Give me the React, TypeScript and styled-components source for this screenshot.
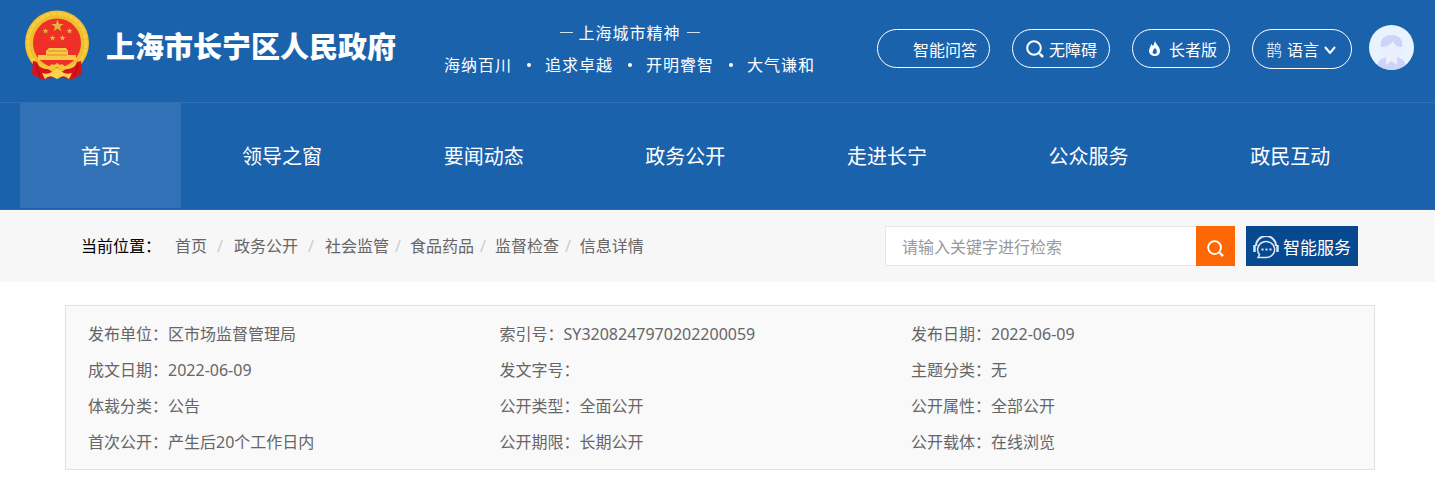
import React from "react";
import styled, { createGlobalStyle } from "styled-components";

const sans = `"Noto Sans", "Noto Sans CJK SC", sans-serif`;

const GlobalStyle = createGlobalStyle`
  * { box-sizing: border-box; }
  body { margin: 0; background: #fff; font-family: ${sans}; font-size: 16px; color: #666; }
  a { color: inherit; text-decoration: none; }
  button, input { font: inherit; }
`;

const Header = styled.header`
  background: #1b62ad;
  color: #fff;
`;

const TopBar = styled.div`
  display: flex;
  align-items: flex-start;
  height: 102px;
  padding: 0 21px 0 24px;
`;

const Brand = styled.a`
  display: flex;
  align-items: center;
  gap: 16px;
  padding-top: 10px;
  width: 420px;
`;

const SiteName = styled.h1`
  margin: 0;
  font: 900 29px/40px "Noto Sans CJK SC", sans-serif;
  white-space: nowrap;
`;

const Spirit = styled.div`
  display: flex;
  flex-direction: column;
  align-items: center;
  padding-top: 20px;
  gap: 8px;
  font: 400 16px/24px "Noto Sans CJK SC", sans-serif;
  letter-spacing: 1px;
  white-space: nowrap;
`;

const SpiritRow = styled.div`
  display: flex;
  align-items: center;
  gap: 6px;
`;

const Dash = styled.i`
  width: 13px;
  height: 1px;
  background: #d5e2f0;
`;

const Virtues = styled.ul`
  display: flex;
  gap: 33px;
  margin: 0;
  padding: 0;
  list-style: none;

  li + li { position: relative; }
  li + li::before {
    content: "";
    position: absolute;
    left: -18px;
    top: 11px;
    width: 4px;
    height: 4px;
    border-radius: 50%;
    background: #fff;
  }
`;

const Tools = styled.div`
  display: flex;
  align-items: flex-start;
  gap: 22px;
  margin-left: auto;
  padding-top: 29px;
`;

const Pill = styled.button<{ $width: number; $inset?: number; $gap?: number; $tall?: boolean }>`
  display: flex;
  align-items: center;
  gap: ${(p) => p.$gap ?? 5}px;
  width: ${(p) => p.$width}px;
  height: ${(p) => (p.$tall ? 40 : 39)}px;
  padding: 0 0 0 ${(p) => p.$inset ?? 13}px;
  border: 1px solid #fff;
  border-radius: 20px;
  background: none;
  color: #fff;
  white-space: nowrap;
`;

const Glyph = styled.span`
  font-family: "Noto Sans CJK SC", sans-serif;
  font-weight: 300;
`;

const Avatar = styled.a`
  display: block;
  width: 45px;
  height: 45px;
  margin: -4px 0 0 -5px;
`;

const Nav = styled.nav`
  display: grid;
  grid-template-columns: 4fr repeat(6, 5fr);
  padding: 0 44px 1px 20px;
  border-top: 1px solid #3270b2;
  border-bottom: 1px solid #2a6bb1;
`;

const NavLink = styled.a<{ $active?: boolean }>`
  padding-top: 3px;
  text-align: center;
  font-size: 20px;
  line-height: 102px;
  background: ${(p) => (p.$active ? "#3271b5" : "none")};
`;

const LocationBar = styled.section`
  display: flex;
  align-items: center;
  justify-content: space-between;
  height: 72px;
  padding: 0 77px 0 81px;
  background: #f7f7f7;
`;

const Crumbs = styled.nav`
  display: flex;
  white-space: nowrap;
  line-height: 24px;
`;

const CrumbLabel = styled.span`
  width: 94px;
  color: #000;
`;

const Slash = styled.span<{ $wide?: boolean }>`
  padding: 0 ${(p) => (p.$wide ? "11px 0 10px" : "9px 0 6px")};
  color: #ccc;
`;

const Actions = styled.div`
  display: flex;
  gap: 11px;
`;

const Search = styled.form`
  display: flex;
`;

const SearchInput = styled.input`
  width: 311px;
  height: 40px;
  padding: 2px 16px 0;
  border: 1px solid #e6e6e6;
  border-right: 0;
  border-radius: 0;
  background: #fff;
  outline: none;
  &::placeholder { color: #999; opacity: 1; }
`;

const SearchButton = styled.button`
  display: flex;
  align-items: center;
  justify-content: center;
  width: 39px;
  padding: 4px 0 0;
  border: 0;
  background: #fe6706;
`;

const Service = styled.a`
  display: flex;
  align-items: center;
  gap: 4px;
  width: 112px;
  height: 40px;
  padding: 3px 0 0 7px;
  background: #07498f;
  color: #fff;
  font-size: 17px;
  line-height: 20px;
  white-space: nowrap;
`;

const Details = styled.dl`
  display: grid;
  grid-template-columns: repeat(3, minmax(0, 32fr)) 4fr;
  grid-auto-rows: 36px;
  margin: 23px 60px 0 65px;
  padding: 10px 0 9px 22px;
  border: 1px solid #e1e1e1;
  background: #f9f9f9;
`;

const Detail = styled.div`
  display: flex;
  line-height: 36px;
  white-space: nowrap;
  &:nth-child(3n + 1) { grid-column: 1; }
  dt, dd { margin: 0; }
`;

const star = (cx: number, cy: number, r: number) =>
  Array.from({ length: 10 }, (_, i) => {
    const a = (Math.PI / 5) * i - Math.PI / 2;
    const d = i % 2 ? r * 0.4 : r;
    return `${cx + d * Math.cos(a)},${cy + d * Math.sin(a)}`;
  }).join(" ");

const Emblem = () => (
  <svg width="66" height="70" viewBox="0 0 66 70" aria-hidden="true">
    <ellipse cx="33" cy="33" rx="28" ry="28.5" fill="#ee3028" stroke="#f0bd2c" strokeWidth="8" />
    <ellipse cx="33" cy="33" rx="29" ry="29.5" fill="none" stroke="#fbd84f" strokeWidth="3" strokeDasharray="5 1" opacity="0.6" />
    <g fill="#e6b63c">
      <polygon points={star(33.5, 16, 6.5)} />
      <polygon points={star(21.5, 21, 3.3)} />
      <polygon points={star(45.5, 21, 3.3)} />
      <polygon points={star(28.5, 28, 3.3)} />
      <polygon points={star(38.5, 28, 3.3)} />
    </g>
    <path d="M25 38 H42 L44 41 V45 H52 V50 H14 V45 H22 V41Z" fill="#f8ca43" />
    <path d="M24 41 H43 M23 45 H43" stroke="#dc8a2c" strokeWidth="1" />
    <path d="M9 51 L14 52 L27 61 L33 64 L39 61 L52 52 L57 51 L58 64 L49 69 L38 68 H28 L17 69 L8 64Z" fill="#d7141a" />
    <path d="M12 55 L16 67 M54 55 L50 67" stroke="#a90d14" strokeWidth="1" />
    <path d="M12 50 Q18 56 26 56 Q27 53 30 55 L33 53 L36 55 Q39 53 40 56 Q48 56 54 50 L51 56 Q46 60 39 59 L33 57 L27 59 Q20 60 15 56Z" fill="#f6c53b" />
    <path d="M18 63 Q25 65 29 61 L33 59 L37 61 Q41 65 48 63 L45 69 Q40 65 37 67 L33 69 L29 67 Q25 65 21 69Z" fill="#ffd34b" />
  </svg>
);

const SearchIcon = ({ size = 18 }: { size?: number }) => (
  <svg width={size} height={size} viewBox="0 0 18 18" fill="none" stroke="#fff" strokeWidth="2" aria-hidden="true">
    <circle cx="8" cy="8" r="6.8" />
    <path d="M13 13 L14 14" />
    <path d="M14 14 L17 17" strokeWidth="2.5" />
  </svg>
);

const FlameIcon = () => (
  <svg width="14" height="17" viewBox="0 0 14 17" aria-hidden="true">
    <path d="M7 0 C7 4 12 6 12 11 C12 15 9 16 7 16 C4 16 1 14 1 11 C1 8 3 7 3 4 L5 6 C6 4 7 2 7 0Z" fill="#fff" />
    <path d="M7 8 C10 11 9 14 6.500 14 C4 14 4 11 7 8Z" fill="#1b62ad" />
  </svg>
);

const ChevronIcon = () => (
  <svg width="12" height="9" viewBox="0 0 12 9" fill="none" stroke="#fff" strokeWidth="2" aria-hidden="true">
    <path d="M1 2 L6 8 L11 2" />
  </svg>
);

const AvatarIcon = () => (
  <svg width="45" height="45" viewBox="0 0 45 45" aria-hidden="true">
    <clipPath id="disc"><circle cx="22.5" cy="22.5" r="22.5" /></clipPath>
    <g clipPath="url(#disc)">
      <rect width="45" height="45" fill="#e9f3fe" />
      <path d="M12 20 V27 C12 29 15 32 17 33 V39 H28 V33 C31 32 33 29 33 26 V20Z" fill="#eaeffd" />
      <path d="M12 22 C10 13 17 10 22.500 10 C29 10 35 14 33 22 C28 22 26 20 24 16 C21 20 18 22 12 22Z" fill="#cbd5f8" />
      <path d="M9 45 V38 Q10 34 17 32 V40 L22.500 36 L28 40 V32 Q35 34 36 38 V45Z" fill="#cbd5f8" />
    </g>
  </svg>
);

const HeadsetIcon = () => (
  <svg width="26" height="23" viewBox="0 0 26 23" fill="none" stroke="#dce7f3" aria-hidden="true">
    <path d="M3 10 A10 10 0 0 1 23 10" strokeWidth="2" />
    <path d="M1.500 9 V16 M24.500 9 V16" strokeWidth="2.5" />
    <path d="M5 21.500 L6.500 18.500 A8.500 8 0 1 1 13 21.500Z" strokeWidth="1.500" />
    <path d="M8.500 13.500 H18.500" strokeWidth="2" strokeDasharray="2 2" />
  </svg>
);

const navItems = ["首页", "领导之窗", "要闻动态", "政务公开", "走进长宁", "公众服务", "政民互动"];
const virtues = ["海纳百川", "追求卓越", "开明睿智", "大气谦和"];
const crumbs = ["首页", "政务公开", "社会监管", "食品药品", "监督检查", "信息详情"];
const details = [
  ["发布单位", "区市场监督管理局"],
  ["索引号", "SY3208247970202200059"],
  ["发布日期", "2022-06-09"],
  ["成文日期", "2022-06-09"],
  ["发文字号", ""],
  ["主题分类", "无"],
  ["体裁分类", "公告"],
  ["公开类型", "全面公开"],
  ["公开属性", "全部公开"],
  ["首次公开", "产生后20个工作日内"],
  ["公开期限", "长期公开"],
  ["公开载体", "在线浏览"],
];

export default function App() {
  return (
    <>
      <GlobalStyle />
      <Header>
        <TopBar>
          <Brand href="#">
            <Emblem />
            <SiteName>上海市长宁区人民政府</SiteName>
          </Brand>
          <Spirit>
            <SpiritRow><Dash />上海城市精神<Dash /></SpiritRow>
            <Virtues>{virtues.map((v) => <li key={v}>{v}</li>)}</Virtues>
          </Spirit>
          <Tools>
            <Pill $width={113} $inset={35}>智能问答</Pill>
            <Pill $width={98}><SearchIcon />无障碍</Pill>
            <Pill $width={98} $inset={15} $gap={7}><FlameIcon />长者版</Pill>
            <Pill $width={100} $tall><Glyph>鹊</Glyph>语言<ChevronIcon /></Pill>
            <Avatar href="#" aria-label="用户中心"><AvatarIcon /></Avatar>
          </Tools>
        </TopBar>
        <Nav>
          {navItems.map((item, i) => <NavLink key={item} href="#" $active={i === 0}>{item}</NavLink>)}
        </Nav>
      </Header>
      <main>
        <LocationBar>
          <Crumbs>
            <CrumbLabel>当前位置：</CrumbLabel>
            {crumbs.map((c, i) => (
              <React.Fragment key={c}>
                {i > 0 && <Slash $wide={i < 3}>/</Slash>}
                <a href="#">{c}</a>
              </React.Fragment>
            ))}
          </Crumbs>
          <Actions>
            <Search onSubmit={(e) => e.preventDefault()}>
              <SearchInput aria-label="检索" placeholder="请输入关键字进行检索" />
              <SearchButton aria-label="搜索"><SearchIcon size={17} /></SearchButton>
            </Search>
            <Service href="#"><HeadsetIcon />智能服务</Service>
          </Actions>
        </LocationBar>
        <Details>
          {details.map(([k, v]) => (
            <Detail key={k}><dt>{k}：</dt><dd>{v}</dd></Detail>
          ))}
        </Details>
      </main>
    </>
  );
}
